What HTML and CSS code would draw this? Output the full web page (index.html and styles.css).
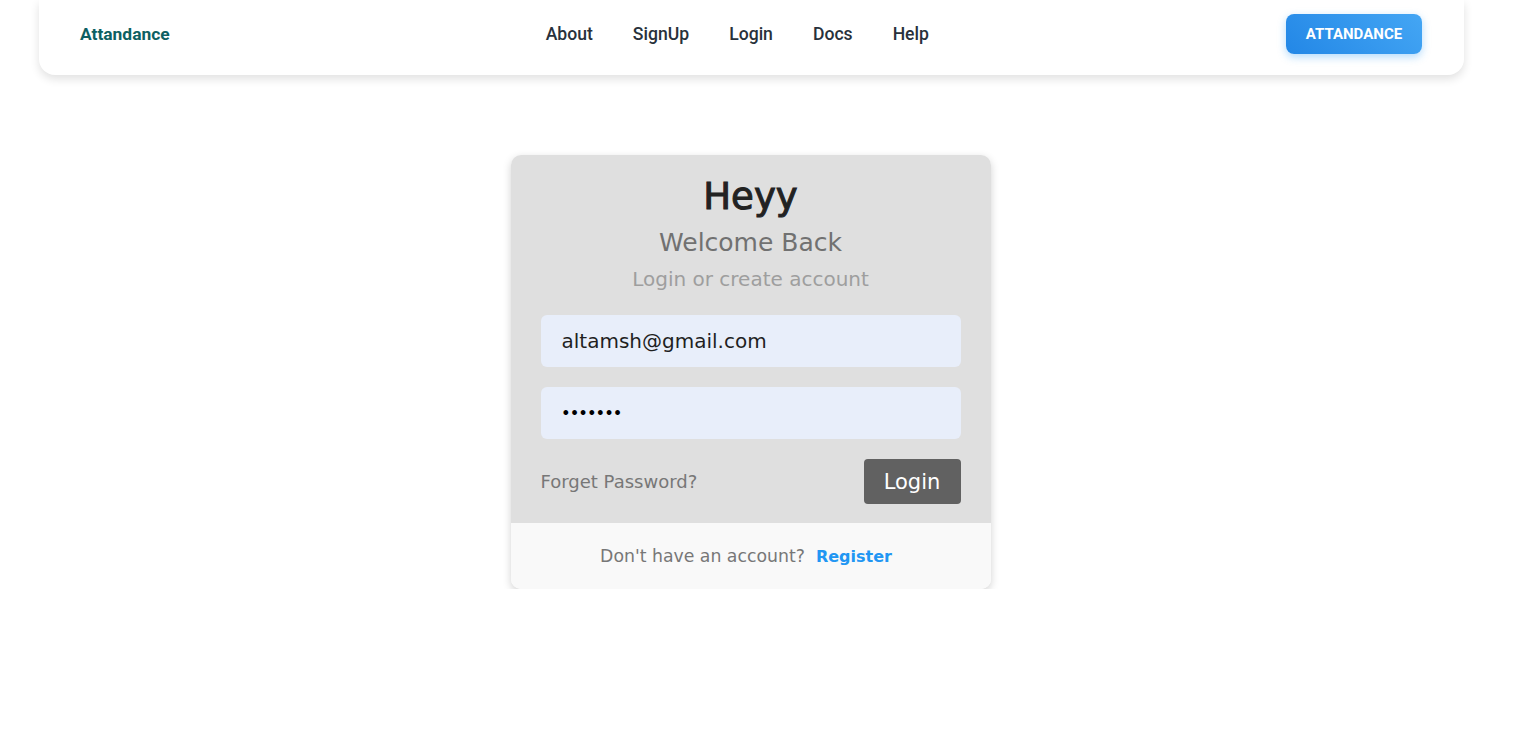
FILE: index.html
```html
<!DOCTYPE html>
<html lang="en">
<head>
<meta charset="utf-8">
<title>Attandance</title>
<link rel="stylesheet" href="styles.css">
</head>
<body>
<header class="navbar">
  <a class="brand" href="#">Attandance</a>
  <nav class="links">
    <a href="#">About</a>
    <a href="#">SignUp</a>
    <a href="#">Login</a>
    <a href="#">Docs</a>
    <a href="#">Help</a>
  </nav>
  <button class="cta">ATTANDANCE</button>
</header>

<main class="page">
  <section class="card">
    <div class="card-body">
      <h1 class="title">Heyy</h1>
      <h2 class="subtitle">Welcome Back</h2>
      <p class="hint">Login or create account</p>
      <div class="field">altamsh@gmail.com</div>
      <div class="field password">•••••••</div>
      <div class="actions">
        <a class="forgot" href="#">Forget Password?</a>
        <button class="login">Login</button>
      </div>
    </div>
    <div class="card-foot">
      <span>Don't have an account?</span>
      <a class="register" href="#">Register</a>
    </div>
  </section>
</main>
</body>
</html>
```

FILE: styles.css
```css
* { box-sizing: border-box; }
html, body { margin: 0; padding: 0; background: #fff; }
body { font-family: Roboto, "Liberation Sans", sans-serif; }
a { text-decoration: none; }

.navbar {
  margin-left: 39px;
  width: 1425px;
  height: 75px;
  padding: 0 42px 7px 41px;
  display: flex;
  align-items: center;
  background: #fff;
  border-radius: 0 0 16px 16px;
  box-shadow: 0 4px 10px rgba(0,0,0,0.12);
}
.brand {
  font-size: 17.4px;
  font-weight: 700;
  color: #0d5f63;
}
.links {
  display: flex;
  gap: 40px;
  margin-left: 376px;
  padding-bottom: 1px;
}
.links a {
  font-size: 17.6px;
  font-weight: 500;
  color: #28313b;
}
.cta {
  margin-left: auto;
  width: 136px;
  height: 40px;
  border: 0;
  border-radius: 8px;
  background: linear-gradient(45deg, #2387e6, #44a6f4);
  color: #fff;
  font-family: Roboto, sans-serif;
  font-weight: 700;
  font-size: 15px;
  box-shadow: 0 3px 8px rgba(33,150,243,0.35);
}

.page {
  display: flex;
  justify-content: center;
  padding-top: 80px;
  padding-right: 23px;
}
.card {
  width: 480px;
  border-radius: 10px;
  overflow: hidden;
  box-shadow: 0 3px 8px rgba(0,0,0,0.18);
  font-family: "DejaVu Sans", sans-serif;
}
.card-body {
  background: #dfdfdf;
  padding: 18px 30px 19px;
  display: flex;
  flex-direction: column;
  align-items: center;
}
.title {
  margin: 0;
  font-size: 37px;
  line-height: 48px;
  font-weight: 400;
  color: #222;
  -webkit-text-stroke: 1px #222;
}
.subtitle {
  margin: 7px 0 0;
  font-size: 25px;
  line-height: 29px;
  font-weight: 400;
  color: #717171;
}
.hint {
  margin: 10px 0 24px;
  font-size: 20px;
  line-height: 24px;
  color: #9e9e9e;
}
.field {
  width: 100%;
  height: 52px;
  border-radius: 6px;
  background: #e8eefa;
  padding-left: 21px;
  display: flex;
  align-items: center;
  font-size: 20px;
  color: #1f1f1f;
}
.field + .field { margin-top: 20px; }
.password {
  font-size: 13.5px;
  font-weight: 700;
  color: #000;
}
.actions {
  width: 100%;
  margin-top: 20px;
  display: flex;
  align-items: center;
  justify-content: space-between;
}
.forgot {
  font-size: 18px;
  color: #777;
}
.login {
  width: 97px;
  height: 45px;
  border: 0;
  border-radius: 4px;
  background: #616161;
  color: #fff;
  font-family: "DejaVu Sans", sans-serif;
  font-size: 21px;
}
.card-foot {
  height: 66px;
  background: #f9f9f9;
  display: flex;
  align-items: center;
  justify-content: center;
  gap: 11px;
  padding-right: 9px;
  font-size: 17.3px;
  color: #777;
}
.register {
  color: #2196f3;
  font-weight: 700;
  font-size: 16px;
}
```
